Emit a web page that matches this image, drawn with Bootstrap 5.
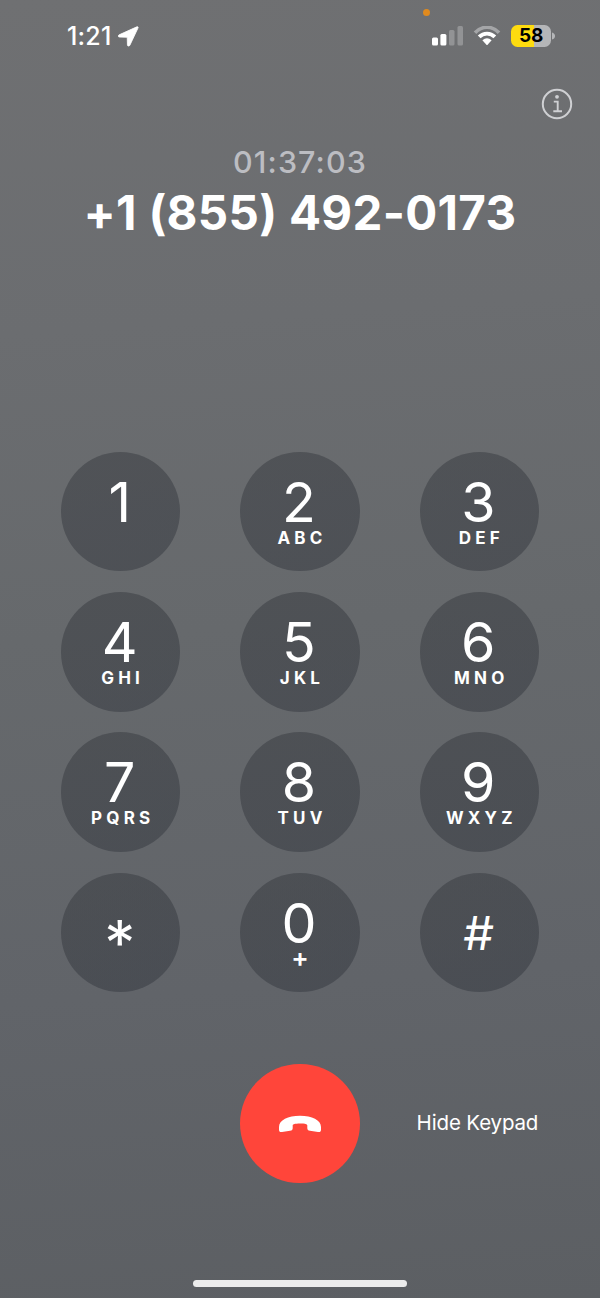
<!DOCTYPE html>
<html lang="en">
<head>
<meta charset="utf-8">
<meta name="viewport" content="width=device-width, initial-scale=1">
<title>Phone call</title>
<link href="https://cdn.jsdelivr.net/npm/bootstrap@5.3.0/dist/css/bootstrap.min.css" rel="stylesheet">
<style>
  body { font-family: Inter, "Liberation Sans", sans-serif; background: #666; color: #fff; }
  .call-screen { height: 1298px; background: linear-gradient(176deg, #6f7072 0%, #6b6d70 25%, #66696c 48%, #616469 75%, #5c5f63 100%); }
  .status-bar { height: 72px; padding: 0 45px 0 67px; }
  .clock { font-size: 25px; font-weight: 500; line-height: 24px; letter-spacing: .2px; }
  .mic-dot { width: 7px; height: 7px; top: 9px; left: 423px; background: #e08a1e; }
  .battery { width: 40px; height: 22px; border-radius: 6.5px; background: linear-gradient(90deg, #fedc0f 58%, #b5b6b8 58%); color: #000; font-size: 19px; line-height: 22px; font-weight: 700; letter-spacing: -.3px; margin-left: 10px; }
  .info-row { height: 64px; padding: 16px 27px 0 0; }
  .timer { height: 54px; line-height: 52px; font-size: 30.5px; font-weight: 500; letter-spacing: 1.1px; color: #bcbdc2; }
  .phone-number { height: 46px; line-height: 45px; font-size: 47.5px; font-weight: 700; letter-spacing: .3px; white-space: nowrap; }
  .keypad { padding: 216px 61px 0 61px; display: grid; grid-template-columns: repeat(3, 119.4px); justify-content: space-between; row-gap: 20.8px; }
  .key { width: 119.4px; height: 119.4px; padding: 22px 0 0; border: 0; border-radius: 50%; color: #fff; background: linear-gradient(155deg, rgba(46,49,54,.42), rgba(46,50,58,.45)); }
  .digit { height: 56px; line-height: 56px; font-size: 55.5px; font-weight: 400; margin-left: -2px; }
  .letters { height: 17px; line-height: 17px; font-size: 17px; font-weight: 650; letter-spacing: 4.2px; margin-left: 4px; }
  .sym-star { font-size: 62px; line-height: 56px; padding-top: 20px; margin-left: -2px; }
  .sym-hash { font-size: 46px; line-height: 56px; padding-top: 10px; margin-left: -2px; transform: scaleX(1.06); }
  .plus-sub { height: 13px; font-size: 26px; line-height: 13px; font-weight: 600; }
  .call-actions { padding: 72px 61px 0; display: grid; grid-template-columns: repeat(3, 119.4px); justify-content: space-between; align-items: center; }
  .end-call { width: 119.4px; height: 119.4px; background: #ff453a; border: 0; }
  .hide-link { font-size: 20.5px; line-height: 24px; letter-spacing: -.15px; color: #fff; white-space: nowrap; margin: -1px 0 0 -3px; }
  .home-bar { width: 214px; height: 7px; background: #ececec; margin-top: 97px; }
</style>
</head>
<body>
<main class="call-screen position-relative overflow-hidden">
  <span class="mic-dot position-absolute rounded-circle"></span>
  <header class="status-bar d-flex align-items-center justify-content-between">
    <div class="d-flex align-items-center">
      <span class="clock">1:21</span>
      <svg style="margin-left:6px" width="21" height="21" viewBox="0 0 20 20"><path d="M18 .8 1.1 8.400C-.1 9 .1 10.500 1.400 10.500L8.800 10.700 9 18C9 19.300 10.700 19.500 11.300 18.300L19 2C19.500 1 18.800.4 18 .8Z" fill="#fff" stroke="#fff" stroke-width=".8" stroke-linejoin="round"/></svg>
    </div>
    <div class="d-flex align-items-center">
      <svg width="32" height="20" viewBox="0 0 32 20"><g fill="#fff"><rect x="0" y="11.500" width="6" height="8" rx="1.500"/><rect x="8.400" y="8" width="6" height="11.500" rx="1.500"/></g><g fill="#929395"><rect x="17" y="4" width="5.500" height="15.500" rx="1.500"/><rect x="25.500" y="0" width="5.500" height="19.500" rx="1.500"/></g></svg>
      <svg width="28" height="20" viewBox="0 0 28 20" style="margin-left:9px"><path d="M2 6.800C9-.6 19-.6 26 6.800" fill="none" stroke="#a4a5a7" stroke-width="3.600"/><path d="M6.200 10.900C10.500 6.400 17.500 6.400 21.800 10.900" fill="none" stroke="#fff" stroke-width="3.800"/><path d="M9.400 14.200Q14 10.400 18.600 14.200L14.600 18.800Q14 19.400 13.400 18.800Z" fill="#fff"/></svg>
      <div class="battery text-center">58</div>
      <svg width="3" height="8" viewBox="0 0 3 8" style="margin-left:1px"><path d="M0 .5Q3 1.500 3 4T0 7.500Z" fill="#b5b6b8"/></svg>
    </div>
  </header>
  <div class="info-row d-flex justify-content-end align-items-start">
    <svg width="32" height="32" viewBox="0 0 32 32" fill="none" stroke="#cfd0d3"><circle cx="16" cy="16" r="14.200" stroke-width="2"/><circle cx="16" cy="8.800" r="1.900" fill="#cfd0d3" stroke="none"/><path d="M12.800 13.600H16.700V23.200M12.300 23.200H21" stroke-width="1.900"/></svg>
  </div>
  <div class="timer text-center">01:37:03</div>
  <div class="phone-number text-center">+1 (855) 492-0173</div>
  <section class="keypad">
    <button class="key d-flex flex-column align-items-center"><span class="digit">1</span></button>
    <button class="key d-flex flex-column align-items-center"><span class="digit">2</span><span class="letters">ABC</span></button>
    <button class="key d-flex flex-column align-items-center"><span class="digit">3</span><span class="letters">DEF</span></button>
    <button class="key d-flex flex-column align-items-center"><span class="digit">4</span><span class="letters">GHI</span></button>
    <button class="key d-flex flex-column align-items-center"><span class="digit">5</span><span class="letters">JKL</span></button>
    <button class="key d-flex flex-column align-items-center"><span class="digit">6</span><span class="letters">MNO</span></button>
    <button class="key d-flex flex-column align-items-center"><span class="digit">7</span><span class="letters">PQRS</span></button>
    <button class="key d-flex flex-column align-items-center"><span class="digit">8</span><span class="letters">TUV</span></button>
    <button class="key d-flex flex-column align-items-center"><span class="digit">9</span><span class="letters">WXYZ</span></button>
    <button class="key d-flex flex-column align-items-center"><span class="sym-star">*</span></button>
    <button class="key d-flex flex-column align-items-center"><span class="digit">0</span><span class="plus-sub">+</span></button>
    <button class="key d-flex flex-column align-items-center"><span class="sym-hash">#</span></button>
  </section>
  <section class="call-actions">
    <span></span>
    <button class="end-call rounded-circle d-flex align-items-center justify-content-center p-0">
      <svg width="44" height="18" viewBox="0 0 44 18"><path d="M22 .8C10 .8 1 5.300 1 12V14.500C1 16.500 2 17.300 4 17L12 15.800C14 15.500 14.700 14.600 14.700 13V10.600C14.700 9.700 15 9.400 15.800 9.200 19 8.400 25 8.400 28.200 9.200 29 9.400 29.300 9.700 29.300 10.600V13C29.300 14.600 30 15.500 32 15.800L40 17C42 17.300 43 16.500 43 14.500V12C43 5.300 34 .8 22 .8Z" fill="#fff"/></svg>
    </button>
    <a class="hide-link text-decoration-none" href="#">Hide Keypad</a>
  </section>
  <div class="home-bar rounded-pill mx-auto"></div>
</main>
<script src="https://cdn.jsdelivr.net/npm/bootstrap@5.3.0/dist/js/bootstrap.bundle.min.js"></script>
</body>
</html>
